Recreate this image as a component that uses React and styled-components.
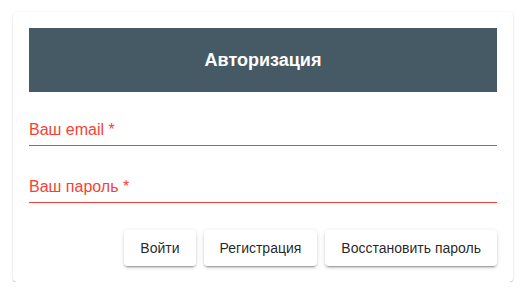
import React from "react";
import styled, { createGlobalStyle } from "styled-components";

const Global = createGlobalStyle`
  html, body { margin: 0; padding: 0; background: #fff; }
  body { font-family: "Liberation Sans", Arial, sans-serif; }
`;

const Page = styled.div`
  padding: 12px 0 0 13px;
`;

const Card = styled.div`
  box-sizing: border-box;
  width: 500px;
  padding: 16px;
  background: #fff;
  border-radius: 4px;
  box-shadow: 0px 2px 1px -1px rgba(0,0,0,0.2), 0px 1px 1px 0px rgba(0,0,0,0.14), 0px 1px 3px 0px rgba(0,0,0,0.12);
`;

const Header = styled.div`
  height: 64px;
  background: #455a64;
  display: flex;
  align-items: center;
  justify-content: center;
`;

const Title = styled.h2`
  margin: 0;
  font-family: "Liberation Sans", Arial, sans-serif;
  font-weight: 700;
  font-size: 18px;
  color: #fff;
`;

const Fields = styled.div`
  display: flex;
  flex-direction: column;
  gap: 31px;
  padding-top: 28px;
`;

const Field = styled.label`
  display: block;
  border-bottom: 1px solid #f44336;
`;

const Label = styled.span`
  display: block;
  font-size: 16px;
  line-height: 20px;
  padding-bottom: 5px;
  color: #f44336;
`;

const Actions = styled.div`
  display: flex;
  justify-content: flex-end;
  gap: 8px;
  margin-top: 27px;
`;

const Button = styled.button`
  height: 36px;
  padding: 0 16px;
  border: none;
  border-radius: 4px;
  background: #fff;
  color: rgba(0,0,0,0.87);
  font-family: "Liberation Sans", Arial, sans-serif;
  font-size: 14px;
  font-weight: 400;
  cursor: pointer;
  box-shadow: 0px 3px 1px -2px rgba(0,0,0,0.2), 0px 2px 2px 0px rgba(0,0,0,0.14), 0px 1px 5px 0px rgba(0,0,0,0.12);
`;

export default function App() {
  return (
    <>
      <Global />
      <Page>
        <Card>
          <Header>
            <Title>Авторизация</Title>
          </Header>
          <Fields>
            <Field><Label>Ваш email *</Label></Field>
            <Field><Label>Ваш пароль *</Label></Field>
          </Fields>
          <Actions>
            <Button>Войти</Button>
            <Button>Регистрация</Button>
            <Button>Восстановить пароль</Button>
          </Actions>
        </Card>
      </Page>
    </>
  );
}
